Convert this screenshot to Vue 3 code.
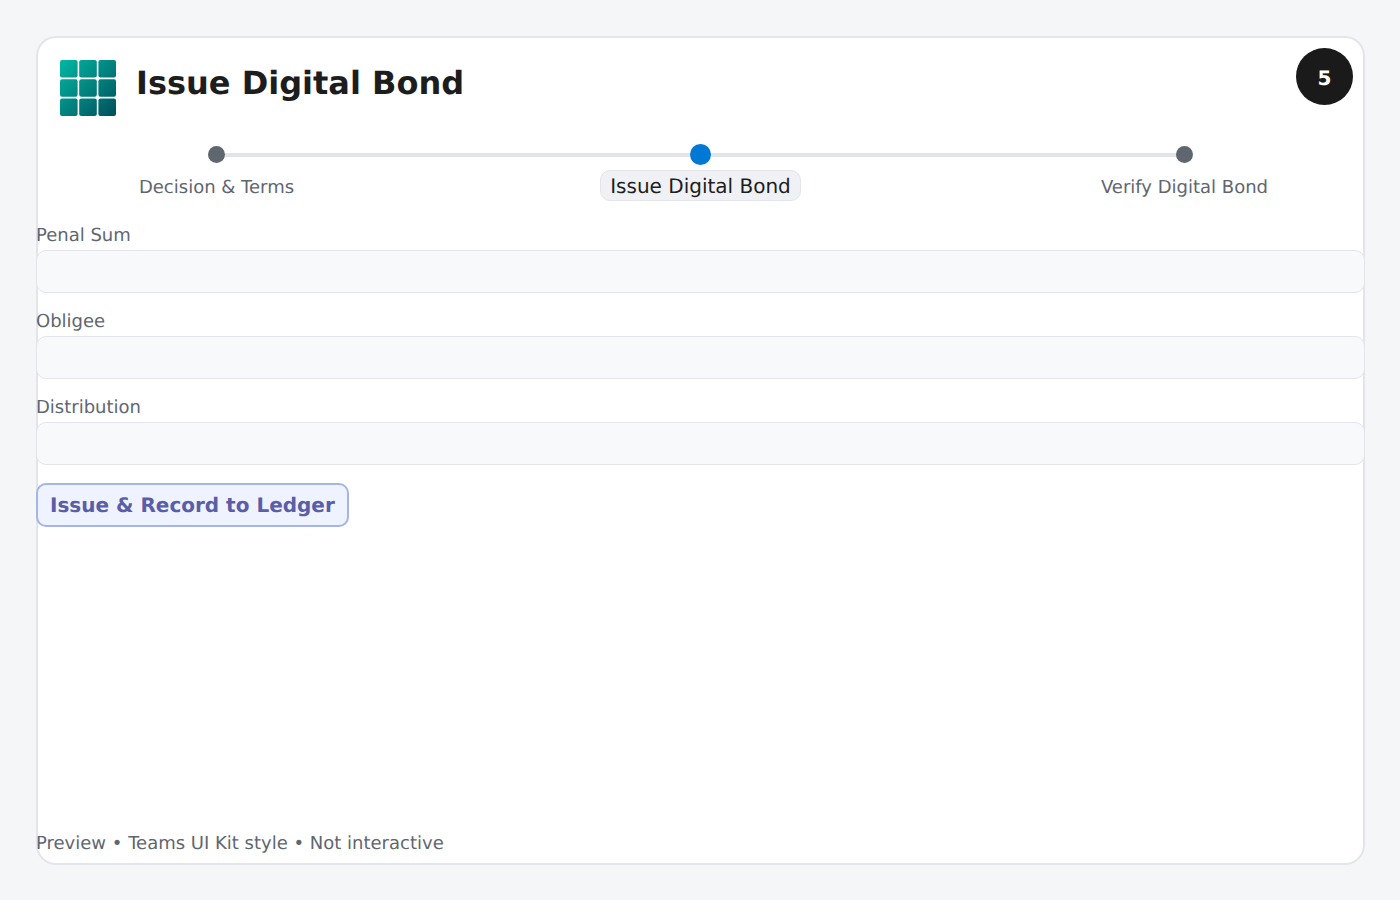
<script setup>
const steps = [
  { label: 'Decision & Terms', active: false },
  { label: 'Issue Digital Bond', active: true },
  { label: 'Verify Digital Bond', active: false },
]
const fields = ['Penal Sum', 'Obligee', 'Distribution']
const cells = []
for (const y of [0, 19.2, 38.4]) for (const x of [0, 19.2, 38.4]) cells.push({ x, y })
</script>

<template>
  <main class="card">
    <span class="badge">5</span>
    <header class="head">
      <svg class="logo" width="56" height="56" viewBox="0 0 56 56" aria-hidden="true">
        <defs>
          <linearGradient id="tile" gradientUnits="userSpaceOnUse" x1="0" y1="0" x2="56" y2="56">
            <stop offset="0" stop-color="#00b9a4" />
            <stop offset="1" stop-color="#004e5c" />
          </linearGradient>
        </defs>
        <rect v-for="c in cells" :key="c.x + '-' + c.y" :x="c.x" :y="c.y" width="17.6" height="17.6" rx="2" fill="url(#tile)" />
      </svg>
      <h1>Issue Digital Bond</h1>
    </header>

    <section class="steps">
      <div class="track"></div>
      <div v-for="s in steps" :key="s.label" class="step">
        <span class="dot-slot"><span class="dot" :class="{ on: s.active }"></span></span>
        <span class="step-label" :class="{ on: s.active }">{{ s.label }}</span>
      </div>
    </section>

    <form class="form">
      <label v-for="f in fields" :key="f" class="field">
        <span>{{ f }}</span>
        <span class="input"></span>
      </label>
      <span class="btn">Issue &amp; Record to Ledger</span>
    </form>

    <footer class="foot">Preview • Teams UI Kit style • Not interactive</footer>
  </main>
</template>

<style>
html, body { background: #f5f6f8; }
</style>

<style scoped>
.card {
  position: relative;
  box-sizing: border-box;
  width: 1329px;
  height: 829px;
  margin: 36px;
  background: #fff;
  border-radius: 20px;
  box-shadow: inset 0 0 0 2px #e3e5ea;
  display: flex;
  flex-direction: column;
  font-family: "DejaVu Sans", sans-serif;
  color: #5f6670;
  text-rendering: geometricPrecision;
}
.badge {
  position: absolute;
  top: 12px;
  right: 12px;
  width: 57px;
  height: 57px;
  padding-top: 2px;
  box-sizing: border-box;
  border-radius: 50%;
  background: #1a1a1a;
  color: #fff;
  font-size: 20px;
  font-weight: 700;
  display: flex;
  align-items: center;
  justify-content: center;
}
.head {
  display: flex;
  align-items: flex-start;
  gap: 20px;
  padding: 24px 0 0 24px;
  height: 80px;
  box-sizing: content-box;
}
.logo { flex: none; }
h1 {
  margin: 0;
  font-size: 32px;
  line-height: 46px;
  font-weight: 700;
  color: #1d1d1d;
}
.steps {
  position: relative;
  display: grid;
  grid-template-columns: repeat(3, 360px);
  gap: 124px;
}
.track {
  position: absolute;
  left: 180px;
  width: 968px;
  top: 13px;
  height: 4px;
  background: #e1e4e9;
}
.step {
  position: relative;
  display: flex;
  flex-direction: column;
  align-items: center;
}
.dot-slot {
  height: 30px;
  margin-top: -1px;
  margin-bottom: 1px;
  display: flex;
  align-items: center;
}
.dot {
  width: 17px;
  height: 17px;
  border-radius: 50%;
  background: #5f6670;
}
.dot.on {
  width: 21px;
  height: 21px;
  background: #0078d4;
}
.step-label {
  box-sizing: border-box;
  padding-left: 1px;
  font-size: 18px;
  line-height: 35px;
  height: 31px;
  white-space: nowrap;
}
.step-label.on {
  font-size: 20px;
  line-height: 31px;
  width: 201px;
  margin-left: 1px;
  padding: 0;
  text-align: center;
  color: #1d1d1d;
  background: #f0f1f5;
  border: 1px solid #e3e5ea;
  border-radius: 10px;
}
.form {
  display: flex;
  flex-direction: column;
  align-items: flex-start;
  gap: 16px;
  margin-top: 22px;
}
.field {
  display: flex;
  flex-direction: column;
  gap: 2px;
  width: 100%;
  font-size: 18px;
  line-height: 25px;
}
.input {
  box-sizing: border-box;
  display: block;
  height: 43px;
  background: #f8f9fb;
  border: 1px solid #e3e5ea;
  border-radius: 10px;
}
.btn {
  box-sizing: border-box;
  height: 44px;
  margin-top: 2px;
  padding: 0 12px;
  display: flex;
  align-items: center;
  font-size: 20px;
  font-weight: 700;
  color: #5b5ea6;
  background: #eff3ff;
  border: 2px solid #a4b5e6;
  border-radius: 10px;
}
.foot {
  margin-top: auto;
  padding-bottom: 9px;
  font-size: 18px;
  line-height: 25px;
}
</style>
